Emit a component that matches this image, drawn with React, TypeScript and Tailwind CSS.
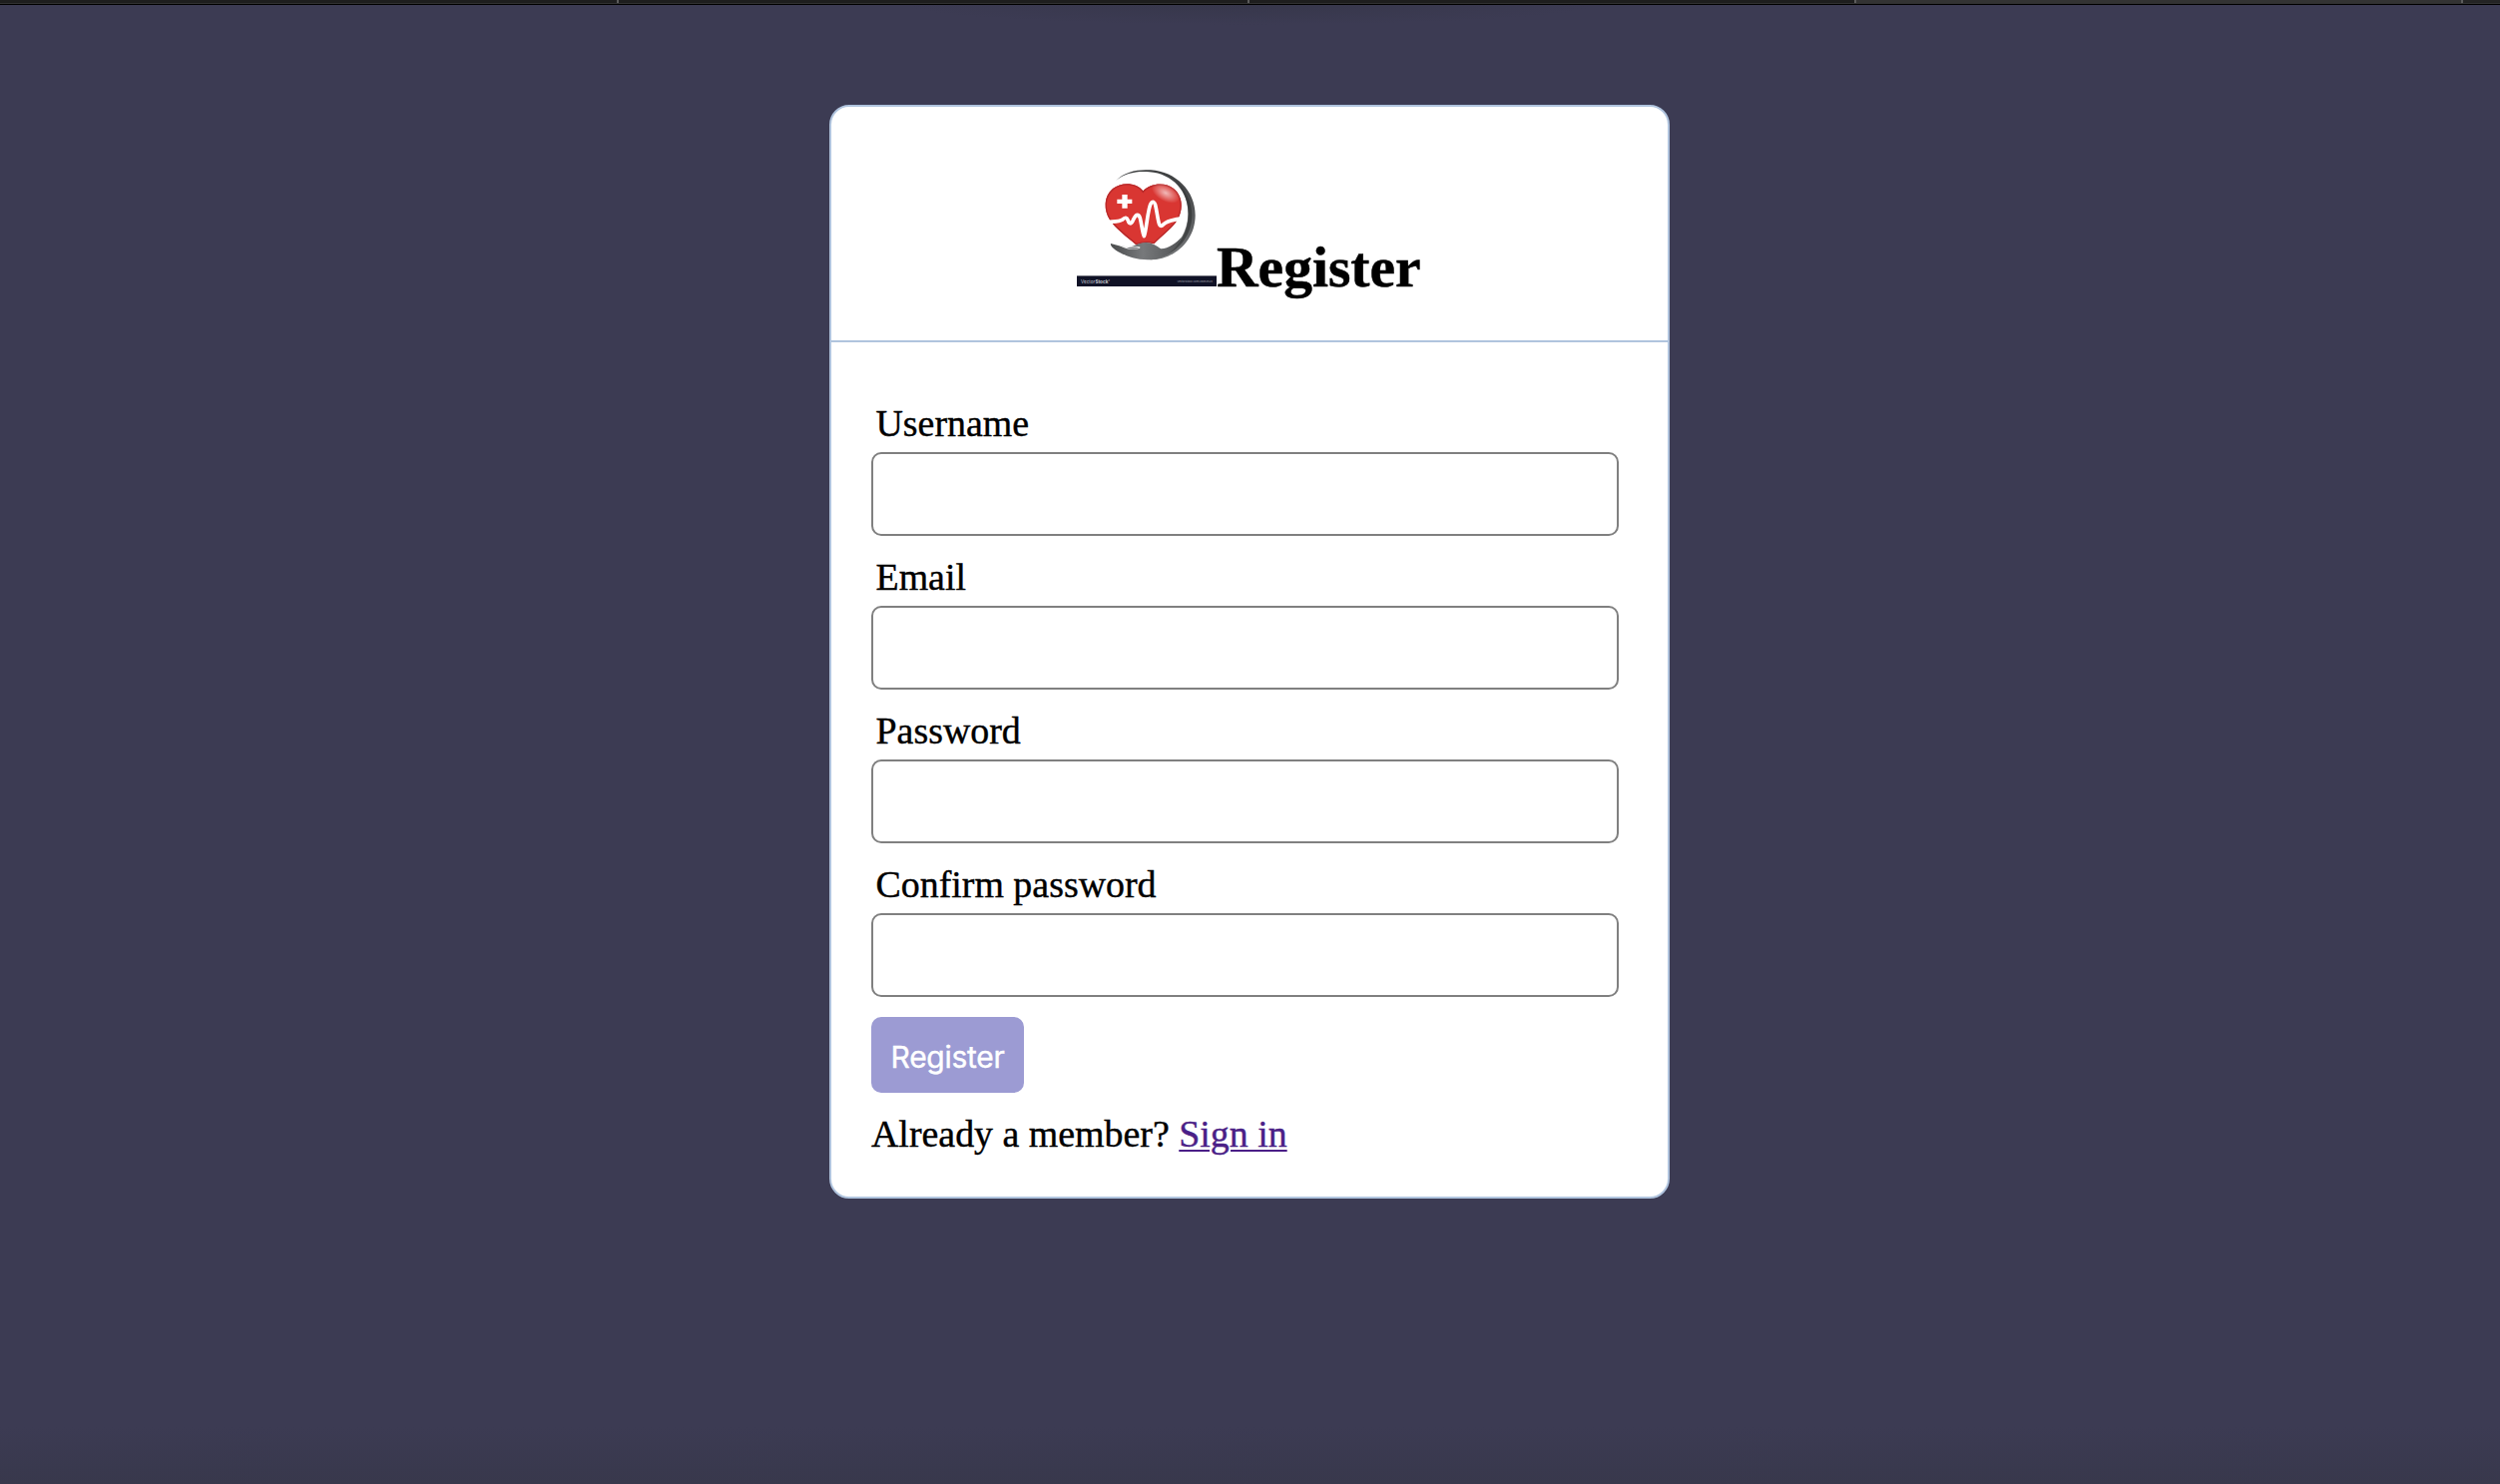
const fields = ["Username", "Email", "Password", "Confirm password"];

function TabStrip() {
  return (
    <div className="flex h-[5px] w-full flex-col bg-black">
      <div className="flex h-[3px] bg-[#1e1e1e]">
        <div className="w-[620px] border-r-2 border-[#5c5c5c]" />
        <div className="w-[632px] border-r-2 border-[#5c5c5c]" />
        <div className="w-[608px] border-r-2 border-[#5c5c5c]" />
        <div className="w-[608px] border-r-2 border-[#5c5c5c] bg-[#333333]" />
        <div className="flex-1 bg-[#242424]" />
      </div>
      <div className="h-px bg-[#303030]" />
    </div>
  );
}

function Logo() {
  return (
    <svg width="140" height="130" viewBox="57 21 420 390" className="block shrink-0 overflow-visible">
      <defs>
        <linearGradient id="ring" x1="0" y1="0" x2="0" y2="1">
          <stop offset="0" stopColor="#3c3e3f" />
          <stop offset="0.5" stopColor="#56585a" />
          <stop offset="1" stopColor="#77797b" />
        </linearGradient>
        <linearGradient id="hand" x1="0" y1="0" x2="1" y2="0">
          <stop offset="0" stopColor="#4a4c4d" />
          <stop offset="0.45" stopColor="#77797b" />
          <stop offset="1" stopColor="#505254" />
        </linearGradient>
        <radialGradient id="shine" cx="0.5" cy="0.5" r="0.5">
          <stop offset="0" stopColor="#fff" stopOpacity="0.65" />
          <stop offset="1" stopColor="#fff" stopOpacity="0" />
        </radialGradient>
        <clipPath id="heart">
          <path d="M256 124 C277 101 322 96 348 117 C378 141 376 184 359 211 C346 235 318 254 289 283 Q263 276 235 286 C205 260 173 238 156 211 C137 181 137 141 165 117 C193 95 237 99 256 124Z" />
        </clipPath>
      </defs>
      <path d="M174 93 C200 66 241 58 279 61 C355 66 413 124 413 197 C413 272 352 331 277 331 L286 323 C345 315 392 265 392 193 C392 126 345 72 275 67 C235 64 203 71 174 93Z" fill="url(#ring)" />
      <path d="M352 91 C382 118 403 155 403 197 C403 253 367 303 316 320 C360 291 390 248 391 194 C392 153 377 117 352 91Z" fill="#303233" opacity="0.65" />
      <path d="M256 124 C277 101 322 96 348 117 C378 141 376 184 359 211 C346 235 318 254 289 283 Q263 276 235 286 C205 260 173 238 156 211 C137 181 137 141 165 117 C193 95 237 99 256 124Z" fill="#d93632" />
      <g clipPath="url(#heart)">
        <path d="M256 124 C277 101 322 96 348 117 C378 141 376 184 359 211 C346 235 318 254 289 283 Q263 276 235 286 C205 260 173 238 156 211 C137 181 137 141 165 117 C193 95 237 99 256 124Z" fill="none" stroke="#b72a2b" strokeWidth="8" />
        <ellipse cx="324" cy="130" rx="46" ry="25" transform="rotate(28 324 130)" fill="url(#shine)" />
      </g>
      <path d="M193 135h16v14h14v13h-14v14h-16v-14h-15v-13h15Z" fill="#fff" />
      <path d="M154 217 C172 216 184 217 193 211 C202 202 207 203 211 213 C214 224 220 224 225 214 C234 194 241 190 247 205 C252 226 254 248 259 260 C266 248 270 174 280 161 C285 154 290 156 293 166 C297 182 299 202 303 218 C306 232 311 231 318 224 C331 212 347 212 363 208" fill="none" stroke="#fff" strokeWidth="11" strokeLinecap="round" strokeLinejoin="round" />
      <path d="M159 282 C176 288 198 292 216 292 C232 291 243 278 266 279 C282 279 296 289 310 298 C333 297 356 281 373 261 C354 305 319 331 270 331 C222 330 190 312 174 302 C163 294 157 287 159 282Z" fill="url(#hand)" />
      <path d="M184 287 C201 292 222 290 244 292 Q253 294 241 298 C221 303 199 297 184 287Z" fill="#f4f4f4" />
      <path d="M207 296 Q225 289 244 296 Q226 302 207 296Z" fill="#85878a" />
      <rect x="57" y="378" width="420" height="33" fill="#101226" />
      <rect x="57" y="378" width="420" height="3" fill="#6d6e78" />
      <text x="69" y="401" fontSize="14" fill="#c9cad2" fontFamily="Inter, sans-serif">Vector<tspan fontWeight="700">Stock</tspan><tspan fontSize="6" dy="-5">®</tspan></text>
      <text x="465" y="400" textAnchor="end" fontSize="8" fill="#a9aab5" fontFamily="Inter, sans-serif">VectorStock.com/28853523</text>
    </svg>
  );
}

export default function App() {
  return (
    <div className="flex h-[1487px] w-full flex-col items-center overflow-hidden bg-[#3c3b53] bg-[linear-gradient(to_bottom,transparent_1430px,#38384c_1487px)] font-['Liberation_Serif',serif] text-[37.9px] leading-[44px] text-black">
      <TabStrip />
      <div className="h-5 w-[700px] shrink-0 bg-[radial-gradient(ellipse_at_top,#37374b,transparent_70%)]" />
      <main className="mt-20 ml-[-1px] flex h-[1096px] w-[842px] shrink-0 flex-col rounded-[20px] border-2 border-[#b0c4de] bg-white">
        <header className="flex h-[236px] shrink-0 items-start border-b-2 border-[#b0c4de] pt-[50px] pl-[246px]">
          <Logo />
          <h1 className="pt-[79px] text-[57.6px] leading-[64px] font-bold [-webkit-text-stroke:0.5px_black]">Register</h1>
        </header>
        <form className="flex flex-col items-start pt-[60px] pl-10 [-webkit-text-stroke:0.4px_currentColor]">
          {fields.map((field) => (
            <label key={field} className="mb-5 flex flex-col">
              <span className="mt-[-1px] mb-[7px] ml-[4.5px] h-11">{field}</span>
              <input
                type={field.includes("assword") ? "password" : "text"}
                className="h-[84px] w-[749px] rounded-[10px] border-2 border-[#808080] bg-white px-5 outline-none"
              />
            </label>
          ))}
          <button
            type="button"
            className="h-[76px] w-[153px] rounded-[10px] bg-[#9c9bd3] pt-[3px] font-['Inter',sans-serif] text-[30px] tracking-[-0.3px] text-white"
          >
            Register
          </button>
          <p className="mt-[19px]">
            Already a member?{" "}
            <a href="#" className="text-[#4b1f87] underline decoration-2 underline-offset-[3px]">
              Sign in
            </a>
          </p>
        </form>
      </main>
    </div>
  );
}
